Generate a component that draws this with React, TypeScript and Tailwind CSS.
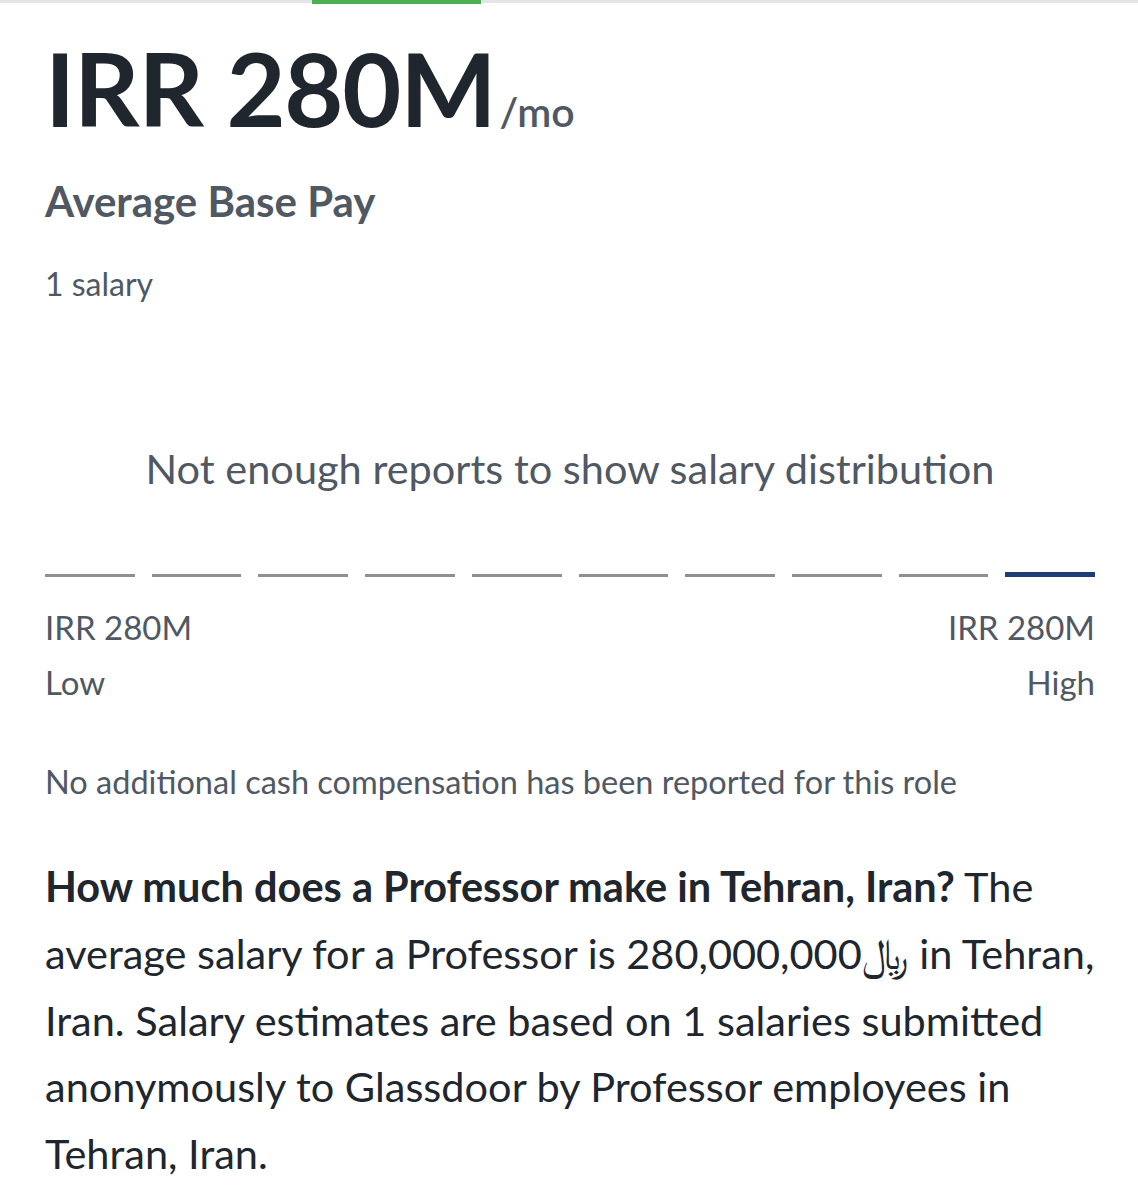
import React from "react";

export default function App() {
  const bars = Array.from({ length: 10 }, (_, i) => i);
  return (
    <div className="w-[1138px] min-h-[1200px] bg-white text-[#20262e]" style={{ fontFamily: "Lato, 'Noto Sans', 'DejaVu Sans', sans-serif" }}>
      <div className="relative h-[4px] w-full">
        <div className="absolute left-0 right-0 top-0 h-[3px] bg-[#e2e4e7]" />
        <div className="absolute left-[312px] top-0 h-[4px] w-[169px] bg-[#4caf50]" />
      </div>
      <div className="pl-[45px] pr-[43px]">
        <div className="mt-[24px] flex items-baseline">
          <span className="text-[102px] font-bold leading-[120px] tracking-[-1.2px]">IRR 280M</span>
          <span className="ml-[4px] text-[41px] font-semibold text-[#505863]">/mo</span>
        </div>
        <div className="mt-[27px] text-[42px] font-bold leading-[52px] text-[#505863]">Average Base Pay</div>
        <div className="mt-[37px] text-[32px] leading-[40px] text-[#505863]">1 salary</div>
        <div className="mt-[139px] text-center text-[41.5px] leading-[50px] text-[#505863]">
          Not enough reports to show salary distribution
        </div>
        <div className="mt-[79px] flex h-[5px] items-end gap-[17px]">
          {bars.map((i) =>
            i === 9 ? (
              <div key={i} className="h-[5px] flex-1 bg-[#1e3d74]" />
            ) : (
              <div key={i} className="h-[3px] flex-1 bg-[#8c8f93]" />
            )
          )}
        </div>
        <div className="mt-[23px] flex justify-between text-[33px] leading-[55px] text-[#505863]">
          <div>
            <div>IRR 280M</div>
            <div>Low</div>
          </div>
          <div className="text-right">
            <div>IRR 280M</div>
            <div>High</div>
          </div>
        </div>
        <div className="mt-[52px] text-[32.5px] leading-[40px] text-[#505863]">
          No additional cash compensation has been reported for this role
        </div>
        <p className="mt-[51px] text-[41.5px] leading-[66.75px] text-[#20262e]">
          <strong className="font-bold">How much does a Professor make in Tehran, Iran?</strong> The
          <br />
          average salary for a Professor is 280,000,000﷼ in Tehran,
          <br />
          Iran. Salary estimates are based on 1 salaries submitted
          <br />
          anonymously to Glassdoor by Professor employees in
          <br />
          Tehran, Iran.
        </p>
      </div>
    </div>
  );
}
